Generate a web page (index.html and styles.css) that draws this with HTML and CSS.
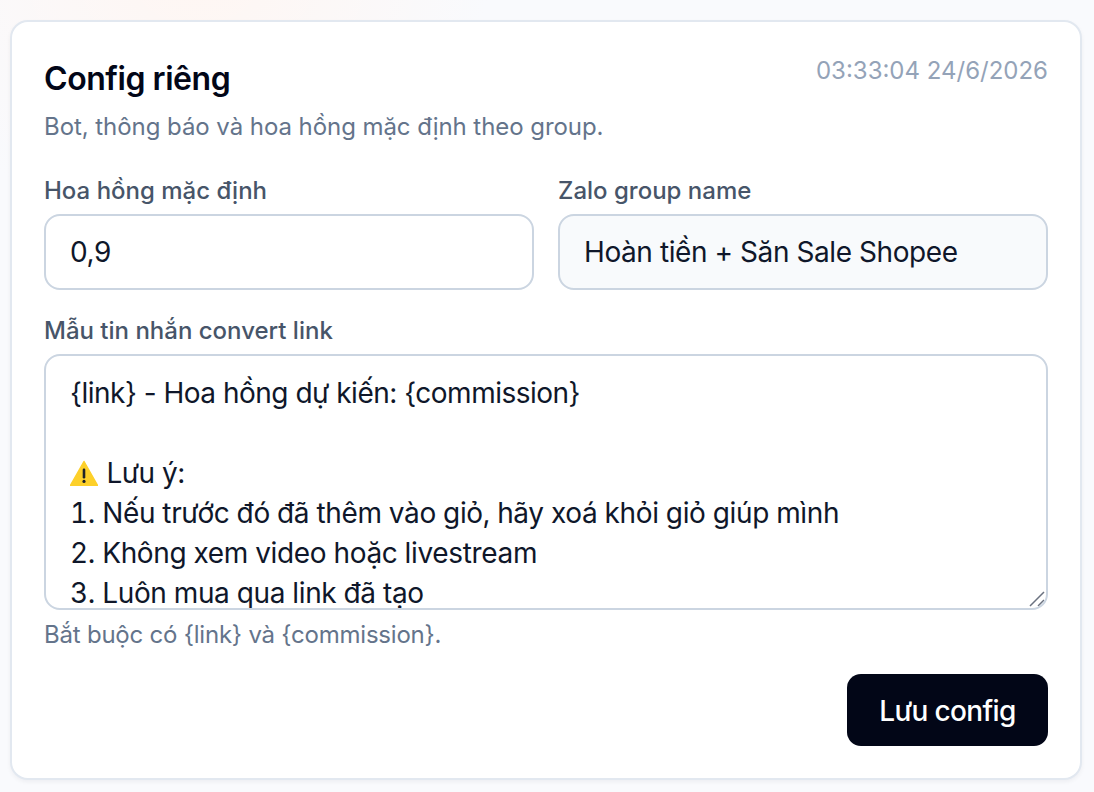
FILE: index.html
```html
<!DOCTYPE html>
<html lang="vi">
<head>
<meta charset="utf-8">
<title>Config riêng</title>
<link rel="stylesheet" href="styles.css">
</head>
<body>
<main class="page">
  <section class="card">
    <header class="head">
      <div>
        <h1 class="title">Config riêng</h1>
        <p class="sub">Bot, thông báo và hoa hồng mặc định theo group.</p>
      </div>
      <span class="stamp">03:33:04 24/6/2026</span>
    </header>
    <div class="grid">
      <div class="field">
        <label class="label">Hoa hồng mặc định</label>
        <div class="input">0,9</div>
      </div>
      <div class="field">
        <label class="label">Zalo group name</label>
        <div class="input input-muted">Hoàn tiền + Săn Sale Shopee</div>
      </div>
    </div>
    <div class="field field-wide">
      <label class="label">Mẫu tin nhắn convert link</label>
      <div class="area">
        <div class="line">{link} - Hoa hồng dự kiến: {commission}</div>
        <div class="line">&nbsp;</div>
        <div class="line"><svg class="warn" viewBox="0 0 28 26" aria-hidden="true"><path d="M14 1.5 27.5 25.5H.5Z" fill="#fdd02a" stroke="#fdd02a" stroke-width="1.5" stroke-linejoin="round"/><rect x="12.7" y="8.5" width="2.6" height="10" rx="1.2" fill="#1f2328"/><circle cx="14" cy="21.4" r="1.6" fill="#1f2328"/></svg> Lưu ý:</div>
        <div class="line line-num">1. Nếu trước đó đã thêm vào giỏ, hãy xoá khỏi giỏ giúp mình</div>
        <div class="line line-num">2. Không xem video hoặc livestream</div>
        <div class="line line-num">3. Luôn mua qua link đã tạo</div>
        <svg class="grip" viewBox="0 0 16 16" aria-hidden="true"><path d="M1 15 15 1M9 15l6-6" stroke="#6b7280" stroke-width="1.5" fill="none"/></svg>
      </div>
      <p class="hint">Bắt buộc có {link} và {commission}.</p>
    </div>
    <div class="actions">
      <button class="save" type="button">Lưu config</button>
    </div>
  </section>
</main>
</body>
</html>
```
FILE: styles.css
```css
* { box-sizing: border-box; }
html, body { margin: 0; height: 100%; }
body {
  font-family: Inter, "Noto Sans", sans-serif;
  background:
    radial-gradient(circle at 18% -6%, #fff6f2 0, rgba(255,246,242,0) 24%),
    #f9fafd;
  color: #0f172a;
}
.page { padding: 20px 12px 12px 10px; }
.card {
  height: 760px;
  background: #fff;
  border: 2px solid #e2e8f0;
  border-radius: 18px;
  padding: 32px;
  box-shadow: 0 2px 4px rgba(15,23,42,.05);
}
.head { display: flex; justify-content: space-between; align-items: flex-start; }
.title { margin: 1px 0 0; font-size: 32px; line-height: 48px; font-weight: 600; letter-spacing: -.45px; color: #020617; }
.sub { margin: 8px 0 0; font-size: 24px; line-height: 32px; letter-spacing: -.06px; color: #64748b; }
.stamp { font-size: 24px; line-height: 48px; color: #94a3b8; margin-top: -7px; }
.grid { display: grid; grid-template-columns: 1fr 1fr; gap: 24px; margin-top: 32px; }
.field { display: flex; flex-direction: column; }
.field-wide { margin-top: 25px; }
.label { font-size: 24px; line-height: 32px; font-weight: 500; color: #475569; margin-bottom: 7px; }
.input {
  height: 76px;
  border: 2px solid #cbd5e1;
  border-radius: 16px;
  padding: 0 24px;
  display: flex;
  align-items: center;
  font-size: 28px;
  letter-spacing: -.42px;
  color: #0f172a;
  background: #fff;
}
.input-muted { background: #f8fafc; }
.area {
  position: relative;
  height: 256px;
  overflow: hidden;
  border: 2px solid #cbd5e1;
  border-radius: 16px;
  padding: 17px 24px 0;
  font-size: 28px;
  line-height: 40px;
  letter-spacing: -.5px;
  color: #0f172a;
  background: #fff;
}
.line { height: 40px; white-space: nowrap; }
.line-num { letter-spacing: -.34px; font-variant-numeric: tabular-nums; }
.warn { width: 28px; height: 26px; margin-right: 1px; vertical-align: -3px; }
.grip { position: absolute; right: 1px; bottom: 1px; width: 16px; height: 16px; }
.hint { margin: 9px 0 0; font-size: 24px; line-height: 32px; letter-spacing: -.22px; color: #64748b; }
.actions { display: flex; justify-content: flex-end; margin-top: 23px; }
.save {
  width: 201px;
  height: 72px;
  border: 0;
  border-radius: 14px;
  padding: 2px 0 0;
  background: #020617;
  color: #fff;
  font-family: inherit;
  font-size: 28px;
  font-weight: 500;
  letter-spacing: -.65px;
}
```
